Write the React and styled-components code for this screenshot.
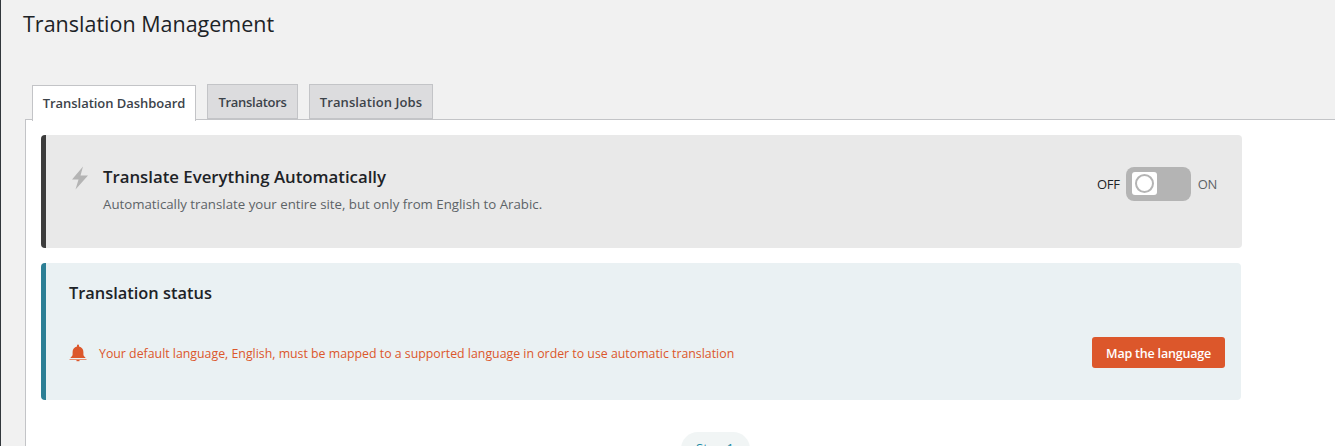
import React from "react";
import styled, { createGlobalStyle } from "styled-components";

const Global = createGlobalStyle`
  html, body { margin: 0; padding: 0; height: 446px; overflow: hidden; background: #f1f1f1; }
  * { box-sizing: border-box; }
  body { font-family: "Open Sans", "Noto Sans", "Liberation Sans", sans-serif; }
`;

const Page = styled.div`
  height: 446px;
  overflow: hidden;
  border-left: 1px solid #32373c;
  background: #f1f1f1;
  padding-left: 22px;
  display: flex;
  flex-direction: column;
`;
const Title = styled.h1`
  flex: none;
  margin: 10px 0 0;
  height: 74px;
  font-size: 21.5px;
  line-height: 28px;
  font-weight: 400;
  color: #1d2327;
`;
const TabBar = styled.div`
  flex: none;
  display: flex;
  align-items: flex-start;
  gap: 11px;
  margin-left: 9px;
  height: 36px;
  position: relative;
  z-index: 1;
`;
const Tab = styled.div`
  height: ${(p) => (p.$active ? "36px" : "35px")};
  margin-top: ${(p) => (p.$active ? "1px" : "0")};
  padding-bottom: ${(p) => (p.$active ? "2px" : "0")};
  width: ${(p) => p.$w}px;
  display: flex;
  align-items: center;
  justify-content: center;
  border: 1px solid #c3c4c7;
  border-bottom: ${(p) => (p.$active ? "none" : "1px solid #c3c4c7")};
  background: ${(p) => (p.$active ? "#fff" : "#dcdcde")};
  font-size: 13px;
  font-weight: 600;
  letter-spacing: ${(p) => p.$ls || 0}px;
  color: #3c434a;
  white-space: nowrap;
`;
const Panel = styled.div`
  flex: 1;
  min-height: 0;
  margin-left: 2px;
  margin-top: -1px;
  background: #fff;
  border-top: 1px solid #c3c4c7;
  border-left: 1px solid #c3c4c7;
  padding: 15px 93px 0 15px;
  display: flex;
  flex-direction: column;
  align-items: stretch;
`;
const AutoCard = styled.section`
  flex: none;
  height: 113px;
  background: #e9e9e9;
  border-left: 5px solid #3c3c3c;
  border-radius: 4px;
  display: flex;
  align-items: flex-start;
  padding: 29px 25px 0 24px;
`;
const Bolt = styled.svg`
  width: 20px;
  height: 24px;
  margin-top: 2px;
  flex: none;
`;
const AutoText = styled.div`
  margin-left: 13px;
  padding-top: 1px;
  flex: 1;
`;
const AutoTitle = styled.h2`
  margin: 0;
  font-size: 16.8px;
  line-height: 24px;
  font-weight: 600;
  color: #1d2327;
`;
const AutoSub = styled.p`
  margin: 6px 0 0;
  font-size: 13.25px;
  line-height: 18px;
  color: #5d6367;
`;
const ToggleWrap = styled.div`
  display: flex;
  align-items: center;
  height: 34px;
  margin-top: 3px;
  font-size: 13px;
`;
const ToggleLabel = styled.span`
  color: ${(p) => p.$c};
  letter-spacing: -0.3px;
`;
const Toggle = styled.div`
  width: 65px;
  height: 34px;
  margin: 0 7px 0 6px;
  border-radius: 8px;
  background: #b4b4b4;
  padding: 5px 6px;
`;
const Knob = styled.div`
  width: 25px;
  height: 23px;
  border-radius: 3px;
  background: #fff;
  display: flex;
  align-items: center;
  justify-content: center;
  &::after {
    content: "";
    width: 15px;
    height: 15px;
    border-radius: 50%;
    border: 2px solid #b4b4b4;
  }
`;
const StatusCard = styled.section`
  flex: none;
  height: 137px;
  margin-top: 15px;
  margin-right: 1px;
  background: #eaf1f3;
  border-left: 5px solid #2c7f95;
  border-radius: 4px;
  padding: 17px 16px 0 23px;
`;
const StatusTitle = styled.h2`
  margin: 0;
  font-size: 16.4px;
  line-height: 26px;
  font-weight: 600;
  color: #1d2327;
`;
const StatusRow = styled.div`
  display: flex;
  align-items: center;
  margin-top: 31px;
  height: 31px;
`;
const Bell = styled.svg`
  width: 18px;
  height: 18px;
  flex: none;
`;
const StatusMsg = styled.span`
  margin-left: 12px;
  padding-top: 1px;
  flex: 1;
  font-size: 12.33px;
  color: #dc572b;
`;
const MapButton = styled.button`
  width: 133px;
  height: 31px;
  border: none;
  border-radius: 3px;
  background: #dc572b;
  color: #fff;
  font-family: inherit;
  font-size: 12.5px;
  font-weight: 600;
  letter-spacing: -0.2px;
  padding: 1px 0 0;
`;
const StepRow = styled.div`
  flex: none;
  display: flex;
  justify-content: center;
  margin-top: 32px;
  padding-left: 147px;
`;
const StepPill = styled.div`
  width: 69px;
  height: 34px;
  border-radius: 17px;
  background: #f1f5f5;
  color: #1a8aa6;
  font-size: 13px;
  line-height: 29px;
  text-align: center;
  padding-top: 2px;
`;

export default function App() {
  return (
    <>
      <Global />
      <Page>
        <Title>Translation Management</Title>
        <TabBar>
          <Tab $active $w={164} $ls={-0.05}>Translation Dashboard</Tab>
          <Tab $w={91} $ls={-0.3}>Translators</Tab>
          <Tab $w={124} $ls={0.1}>Translation Jobs</Tab>
        </TabBar>
        <Panel>
          <AutoCard>
            <Bolt viewBox="0 0 20 24">
              <path d="M13 0.5 L2 13.5 L8.5 13.5 L5.5 23.5 L18 9.5 L10.5 9.5 Z" fill="#b4b4b4" />
            </Bolt>
            <AutoText>
              <AutoTitle>Translate Everything Automatically</AutoTitle>
              <AutoSub>Automatically translate your entire site, but only from English to Arabic.</AutoSub>
            </AutoText>
            <ToggleWrap>
              <ToggleLabel $c="#1d2327">OFF</ToggleLabel>
              <Toggle><Knob /></Toggle>
              <ToggleLabel $c="#5d6367">ON</ToggleLabel>
            </ToggleWrap>
          </AutoCard>
          <StatusCard>
            <StatusTitle>Translation status</StatusTitle>
            <StatusRow>
              <Bell viewBox="0 0 18 18">
                <path d="M9 0.5a1 1 0 0 1 1 1v.9c2.8.5 4.4 2.7 4.4 5.6v2.6c0 1 .7 2 2 2.9v.5H1.6v-.5c1.300-.9 2-1.900 2-2.900V8c0-2.900 1.600-5.100 4.400-5.600v-.9a1 1 0 0 1 1-1z" fill="#dc572b" />
                <rect x="0.500" y="15" width="17" height="1" fill="#e88e70" />
                <rect x="7.500" y="16" width="3" height="1.200" fill="#dc572b" />
              </Bell>
              <StatusMsg>Your default language, English, must be mapped to a supported language in order to use automatic translation</StatusMsg>
              <MapButton>Map the language</MapButton>
            </StatusRow>
          </StatusCard>
          <StepRow>
            <StepPill>Step 1</StepPill>
          </StepRow>
        </Panel>
      </Page>
    </>
  );
}
